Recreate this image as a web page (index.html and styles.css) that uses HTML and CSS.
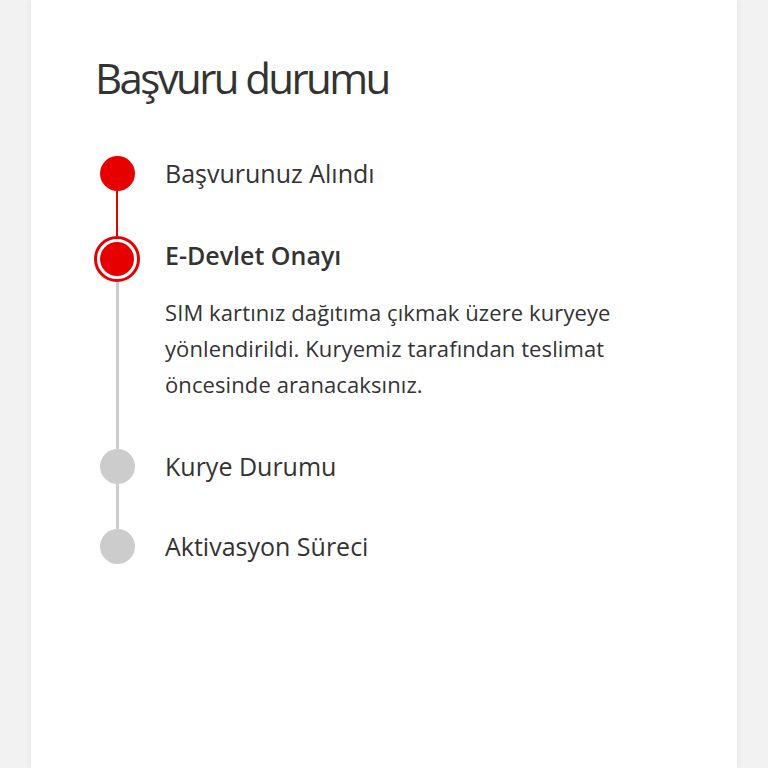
FILE: index.html
```html
<!DOCTYPE html>
<html lang="tr">
<head>
    <meta charset="UTF-8">
    <meta name="viewport" content="width=device-width, initial-scale=1.0">
    <title>Başvuru durumu</title>
    <link rel="stylesheet" href="styles.css">
</head>
<body>
    <div class="page">
        <div class="card">
            <h1>Başvuru durumu</h1>
            <ol class="steps">
                <li class="step step-done">
                    <div class="step-marker"><span class="step-dot"></span><span class="step-line"></span></div>
                    <div class="step-body"><p class="step-title">Başvurunuz Alındı</p></div>
                </li>
                <li class="step step-active">
                    <div class="step-marker"><span class="step-dot"></span><span class="step-line"></span></div>
                    <div class="step-body">
                        <p class="step-title">E-Devlet Onayı</p>
                        <p class="step-text">SIM kartınız dağıtıma çıkmak üzere kuryeye yönlendirildi. Kuryemiz tarafından teslimat öncesinde aranacaksınız.</p>
                    </div>
                </li>
                <li class="step">
                    <div class="step-marker"><span class="step-dot"></span><span class="step-line"></span></div>
                    <div class="step-body"><p class="step-title">Kurye Durumu</p></div>
                </li>
                <li class="step step-last">
                    <div class="step-marker"><span class="step-dot"></span></div>
                    <div class="step-body"><p class="step-title">Aktivasyon Süreci</p></div>
                </li>
            </ol>
        </div>
    </div>
</body>
</html>
```

FILE: styles.css
```css
* {
    margin: 0;
    padding: 0;
    box-sizing: border-box;
    font-family: 'Open Sans', 'Noto Sans', sans-serif;
}

body {
    background: #f2f2f2;
    color: #333;
}

.page {
    padding: 0 31px;
}

.card {
    background: white;
    min-height: 768px;
    padding: 48px 60px 0 63px;
    box-shadow: 0 0 6px rgba(0, 0, 0, 0.08);
}

h1 {
    font-size: 42px;
    font-weight: 400;
    letter-spacing: -2.6px;
    line-height: 60px;
    color: #333;
    margin-left: 1px;
    margin-bottom: 48px;
}

.steps {
    list-style: none;
}

.step {
    display: grid;
    grid-template-columns: 46px 1fr;
    column-gap: 25px;
}

.step-marker {
    display: flex;
    flex-direction: column;
    align-items: center;
}

.step-dot {
    width: 35px;
    height: 35px;
    border-radius: 50%;
    background: #ccc;
    flex-shrink: 0;
}

.step-line {
    flex: 1;
    width: 3px;
    background: #ccc;
}

.step-done .step-dot {
    background: #e60000;
}

.step-done .step-line {
    width: 2px;
    background: #e60000;
}

.step-active .step-dot {
    width: 46px;
    height: 46px;
    border: 3px solid #e60000;
    padding: 3px;
    background: #e60000;
    background-clip: content-box;
}

.step-body {
    padding-bottom: 45px;
}

.step-title {
    font-size: 25px;
    line-height: 35px;
}

.step-active .step-body {
    padding-bottom: 47px;
}

.step-active .step-title {
    line-height: 38px;
    font-weight: 600;
}

.step-text {
    margin-top: 20px;
    font-size: 22px;
    line-height: 36px;
    letter-spacing: 0.1px;
    max-width: 475px;
}

.step-last .step-body {
    padding-bottom: 0;
}
```
